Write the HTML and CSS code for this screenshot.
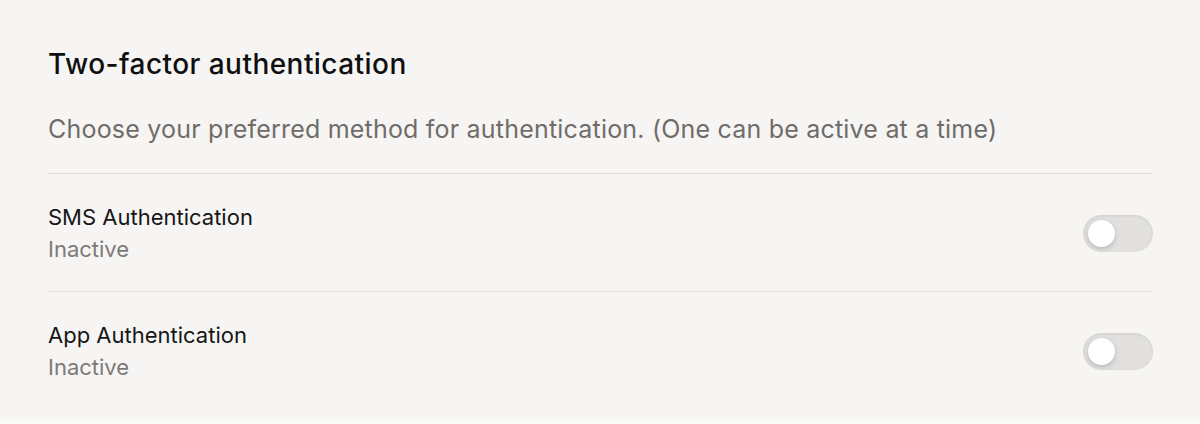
FILE: index.html
```html
<!DOCTYPE html>
<html lang="en">
<head>
<meta charset="utf-8">
<title>Two-factor authentication</title>
<link rel="stylesheet" href="styles.css">
</head>
<body>
<section class="card">
  <header class="card-header">
    <h2 class="title">Two-factor authentication</h2>
    <p class="subtitle">Choose your preferred method for authentication. (One can be active at a time)</p>
  </header>
  <div class="row">
    <div class="row-text">
      <div class="row-label">SMS Authentication</div>
      <div class="row-status">Inactive</div>
    </div>
    <span class="toggle" role="switch" aria-checked="false"><span class="knob"></span></span>
  </div>
  <div class="row">
    <div class="row-text">
      <div class="row-label">App Authentication</div>
      <div class="row-status">Inactive</div>
    </div>
    <span class="toggle" role="switch" aria-checked="false"><span class="knob"></span></span>
  </div>
</section>
</body>
</html>
```
FILE: styles.css
```css
html, body {
  margin: 0;
  padding: 0;
  background: #fbfbfa;
}
body {
  font-family: "Inter", "Noto Sans", sans-serif;
  width: 1200px;
  height: 424px;
  overflow: hidden;
}
.card {
  background: #f6f5f3;
  height: 417px;
  box-sizing: border-box;
  padding: 48px 47px 0 48px;
  box-shadow: 0 1px 4px rgba(0,0,0,0.04);
}
.card-header {
  border-bottom: 1px solid #dfdddb;
  padding-bottom: 29px;
}
.title {
  margin: 0;
  font-size: 28px;
  line-height: 32px;
  font-weight: 500;
  letter-spacing: 0.45px;
  color: #0f0f0f;
}
.subtitle {
  margin: 34px 0 0 0;
  font-size: 25px;
  line-height: 30px;
  font-weight: 400;
  letter-spacing: 0.2px;
  color: #6f6c6a;
}
.row {
  display: flex;
  align-items: center;
  justify-content: space-between;
  padding: 29px 0 28px 0;
  border-bottom: 1px solid #dfdddb;
}
.row:last-child {
  border-bottom: none;
}
.row-text {
  display: flex;
  flex-direction: column;
  gap: 4px;
}
.row-label {
  font-size: 22px;
  line-height: 28px;
  color: #161616;
}
.row-status {
  font-size: 22px;
  line-height: 28px;
  color: #7c7a78;
}
.toggle {
  width: 70px;
  height: 37px;
  border-radius: 19px;
  background: #e1e0de;
  box-shadow: inset 0 1px 3px rgba(0,0,0,0.08);
  display: flex;
  align-items: center;
  padding: 0 5px;
  box-sizing: border-box;
}
.knob {
  width: 27px;
  height: 27px;
  border-radius: 50%;
  background: #ffffff;
  box-shadow: 0 2px 5px rgba(0,0,0,0.18);
}
```
